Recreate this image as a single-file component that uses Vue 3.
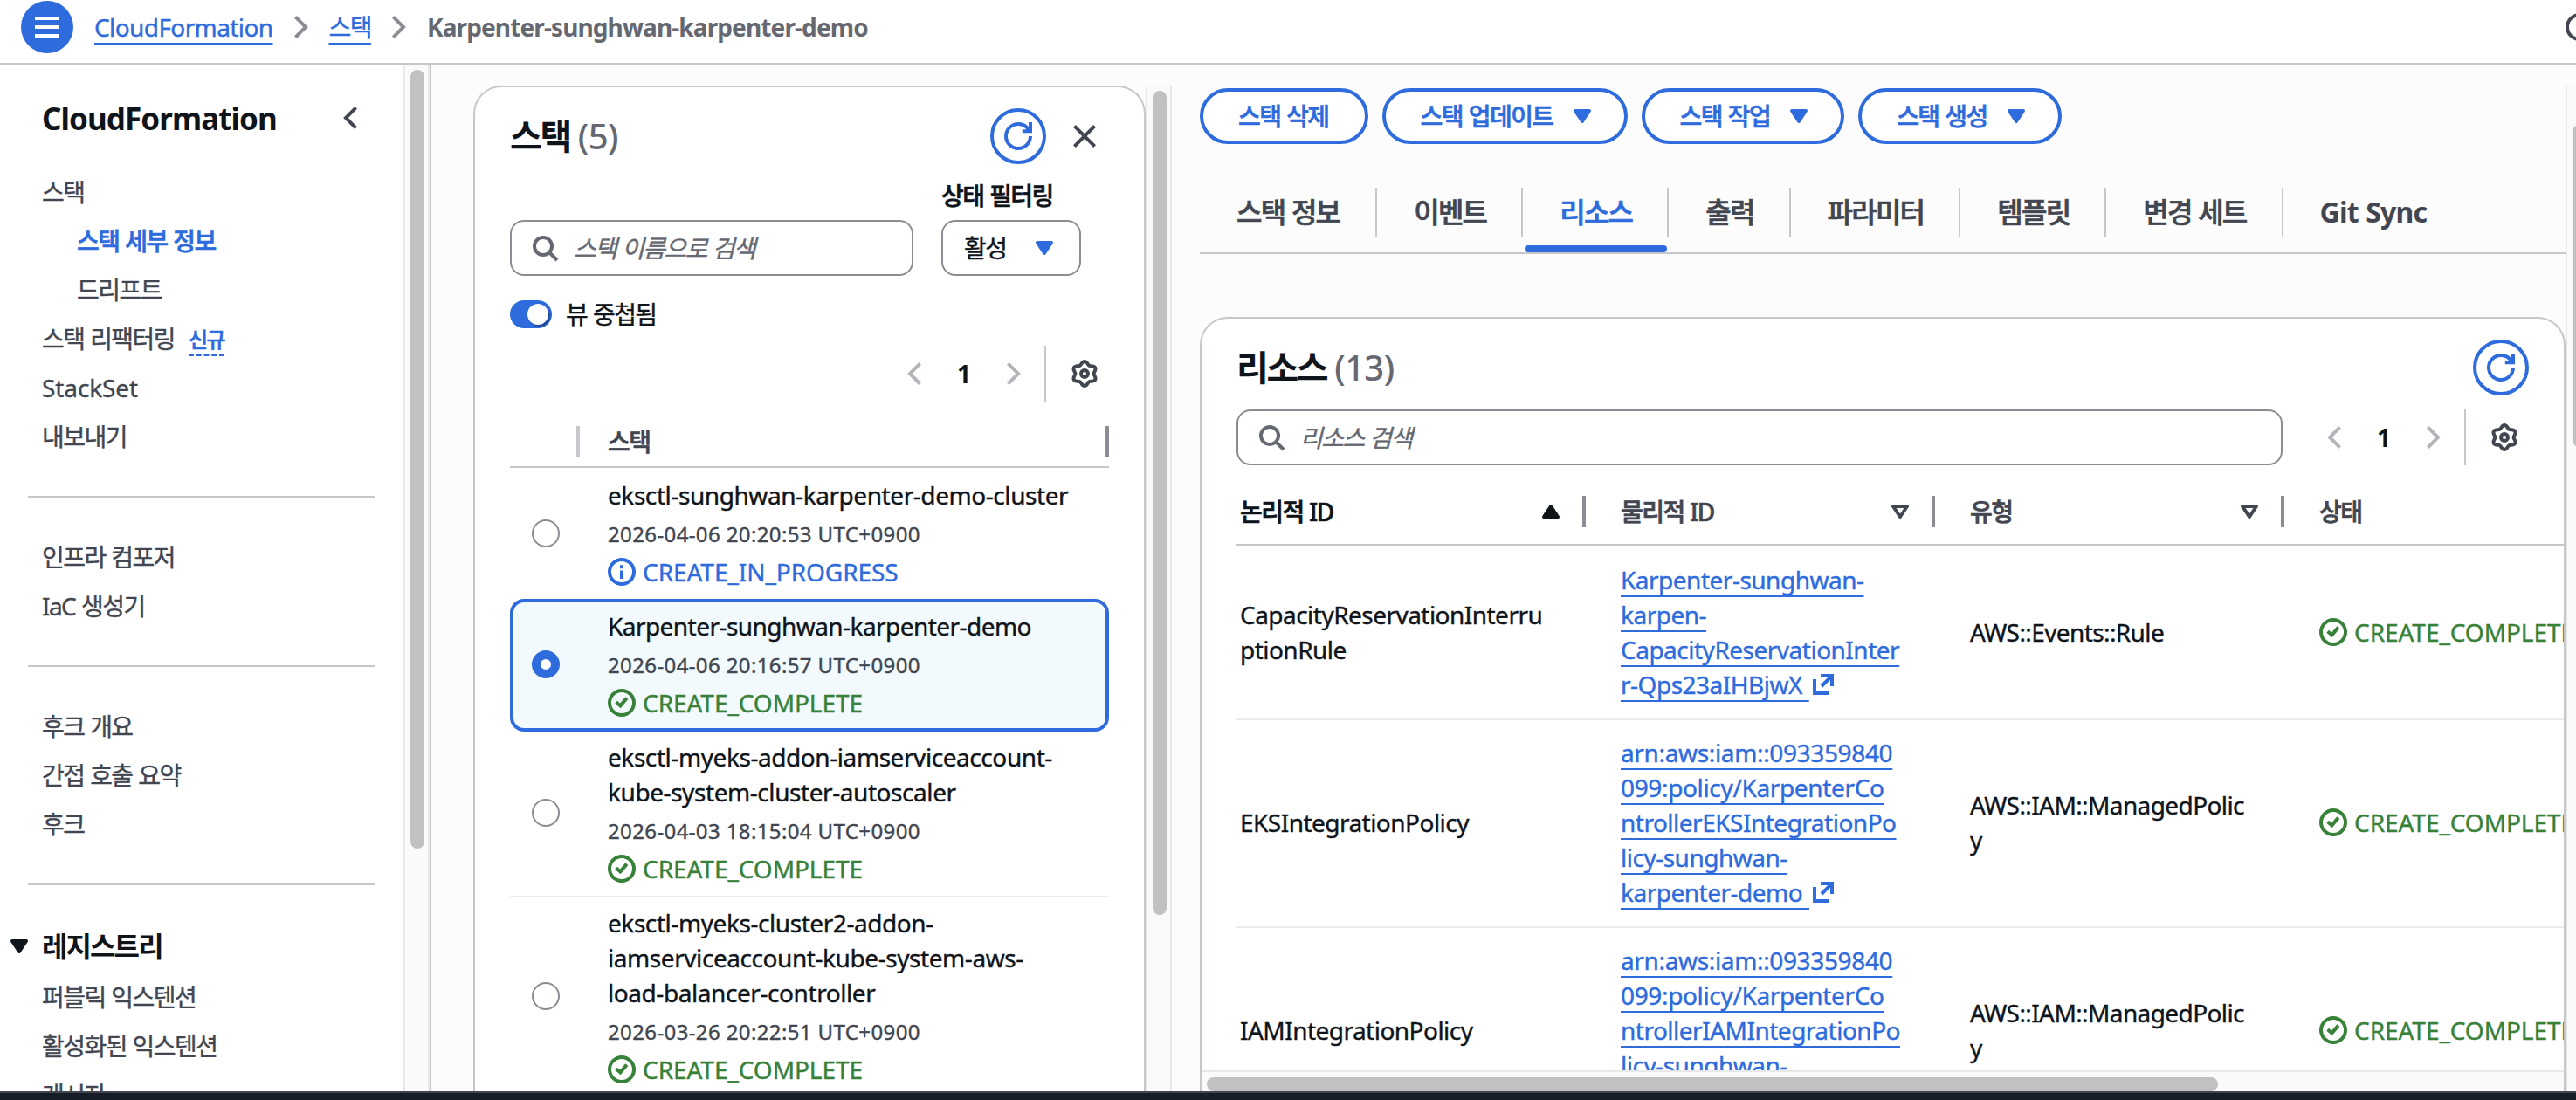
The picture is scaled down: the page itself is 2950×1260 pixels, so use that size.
<template>
  <div class="console">
    <header class="topbar">
      <button class="menu" aria-label="menu">
        <span></span><span></span><span></span>
      </button>
      <nav class="crumbs">
        <a class="crumb en">CloudFormation</a>
        <svg class="icon sep" viewBox="0 0 16 16"><path d="M4.7 2.2 10.5 8 4.7 13.8" /></svg>
        <a class="crumb">스택</a>
        <svg class="icon sep" viewBox="0 0 16 16"><path d="M4.7 2.2 10.5 8 4.7 13.8" /></svg>
        <span class="crumb-current">Karpenter-sunghwan-karpenter-demo</span>
      </nav>
      <svg class="icon info-edge" viewBox="0 0 16 16"><circle cx="8" cy="8" r="7" /></svg>
    </header>

    <div class="body">
      <!-- Navigation -->
      <aside class="sidebar">
        <div class="sidebar-content">
          <div class="sidebar-head">
            <h2>CloudFormation</h2>
            <svg class="icon dark" viewBox="0 0 16 16"><path d="M10.8 2.2 5 8l5.8 5.8" /></svg>
          </div>
          <template v-for="(group, g) in navGroups" :key="g">
            <hr v-if="g > 0">
            <div v-if="group.title" class="nav-title">
              <svg class="icon caret black" viewBox="0 0 16 16"><path d="m8 11 4-6H4z" /></svg>
              <span>{{ group.title }}</span>
            </div>
            <a
              v-for="item in group.items"
              :key="item.label"
              class="nav-item"
              :class="{ sub: item.sub, active: item.active, en: item.en }"
            >
              {{ item.label }}<span v-if="item.isNew" class="new">신규</span>
            </a>
          </template>
        </div>
        <div class="vscroll nav-scroll"><div class="thumb"></div></div>
      </aside>

      <!-- Stack list -->
      <section class="stacks-area">
        <div class="panel stacks">
          <div class="stacks-head">
            <h1>스택 <span>(5)</span></h1>
            <button class="refresh">
              <svg class="icon" viewBox="0 0 16 16"><path :d="refreshPath" /></svg>
            </button>
            <svg class="icon dark close" viewBox="0 0 16 16"><path d="M2.2 2.2l11.6 11.6M13.8 2.2 2.2 13.8" /></svg>
          </div>
          <div class="filters">
            <div class="search">
              <svg class="icon" viewBox="0 0 16 16"><circle cx="7" cy="7" r="5" /><path d="m15 15-4.5-4.5" /></svg>
              <em>스택 이름으로 검색</em>
            </div>
            <div class="status-filter">
              <label>상태 필터링</label>
              <div class="select">
                <span>활성</span>
                <svg class="icon caret blue" viewBox="0 0 16 16"><path d="m8 11 4-6H4z" /></svg>
              </div>
            </div>
          </div>
          <div class="nested">
            <span class="toggle"><i></i></span>
            <span>뷰 중첩됨</span>
          </div>
          <div class="pager stacks-pager">
            <svg class="icon off" viewBox="0 0 16 16"><path d="M10.8 2.2 5 8l5.8 5.8" /></svg>
            <b>1</b>
            <svg class="icon off" viewBox="0 0 16 16"><path d="M5.2 2.2 11 8l-5.8 5.8" /></svg>
            <span class="rule"></span>
            <svg class="icon dark" viewBox="0 0 32 32"><path class="thick" :d="gearPath" /><circle class="thick" cx="16" cy="16" r="4" /></svg>
          </div>
          <div class="stacks-th">
            <span class="bar light"></span>
            <span class="th">스택</span>
            <span class="bar"></span>
          </div>
          <div
            v-for="stack in stacks"
            :key="stack.date"
            class="stack"
            :class="{ selected: stack.id === selectedId, lined: stack.lined }"
            @click="selectedId = stack.id"
          >
            <span class="radio"></span>
            <div class="stack-text">
              <div v-for="line in stack.name" :key="line" class="name">{{ line }}</div>
              <div class="date">{{ stack.date }}</div>
              <div v-if="stack.status === 'CREATE_COMPLETE'" class="status ok">
                <svg class="icon" viewBox="0 0 16 16"><circle cx="8" cy="8" r="7" /><path d="M4.8 7.6 7.2 9.7 10.9 5.3" /></svg>
                <span>{{ stack.status }}</span>
              </div>
              <div v-else class="status progress">
                <svg class="icon" viewBox="0 0 16 16"><circle cx="8" cy="8" r="7" /><path d="M8 4.1v2M8 7.2V12" /></svg>
                <span>{{ stack.status }}</span>
              </div>
            </div>
          </div>
        </div>
        <div class="vscroll stacks-scroll"><div class="thumb"></div></div>
      </section>

      <!-- Stack details -->
      <section class="details">
        <div class="details-content">
          <div class="actions">
            <button v-for="action in actions" :key="action.label" class="action">
              {{ action.label }}
              <svg v-if="action.menu" class="icon caret blue" viewBox="0 0 16 16"><path d="m8 11 4-6H4z" /></svg>
            </button>
          </div>
          <div class="tabs">
            <a v-for="tab in tabs" :key="tab" class="tab" :class="{ current: tab === activeTab, latin: tab === 'Git Sync' }" @click="activeTab = tab">
              <span>{{ tab }}</span>
            </a>
          </div>
          <div class="panel resources">
            <div class="resources-head">
              <h1>리소스 <span>(13)</span></h1>
              <button class="refresh">
                <svg class="icon" viewBox="0 0 16 16"><path :d="refreshPath" /></svg>
              </button>
            </div>
            <div class="resources-tools">
              <div class="search">
                <svg class="icon" viewBox="0 0 16 16"><circle cx="7" cy="7" r="5" /><path d="m15 15-4.5-4.5" /></svg>
                <em>리소스 검색</em>
              </div>
              <div class="pager">
                <svg class="icon off" viewBox="0 0 16 16"><path d="M10.8 2.2 5 8l5.8 5.8" /></svg>
                <b>1</b>
                <svg class="icon off" viewBox="0 0 16 16"><path d="M5.2 2.2 11 8l-5.8 5.8" /></svg>
                <span class="rule"></span>
                <svg class="icon dark" viewBox="0 0 32 32"><path class="thick" :d="gearPath" /><circle class="thick" cx="16" cy="16" r="4" /></svg>
              </div>
            </div>
            <div class="grid-row grid-head">
              <div class="th sorted">
                논리적 ID
                <svg class="icon caret black" viewBox="0 0 16 16"><path d="m8 5 4 6H4z" /></svg>
                <span class="bar"></span>
              </div>
              <div class="th">
                물리적 ID
                <svg class="icon sort" viewBox="0 0 16 16"><path d="m8 11 4-6H4z" /></svg>
                <span class="bar"></span>
              </div>
              <div class="th">
                유형
                <svg class="icon sort" viewBox="0 0 16 16"><path d="m8 11 4-6H4z" /></svg>
                <span class="bar"></span>
              </div>
              <div class="th">상태</div>
            </div>
            <div v-for="res in resources" :key="res.logical[0]" class="grid-row">
              <div>
                <div v-for="line in res.logical" :key="line" class="name">{{ line }}</div>
              </div>
              <div class="physical">
                <div v-for="(line, i) in res.physical" :key="line" :class="{ arn: i < 2 && line.includes('0') }">
                  <a>{{ line }}</a><svg v-if="i === res.physical.length - 1" class="external" viewBox="0 0 24 24"><path d="M2 6v16h16M9 2h13v12M22 2 10 14" /></svg>
                </div>
              </div>
              <div class="type">
                <div v-for="line in res.type" :key="line">{{ line }}</div>
              </div>
              <div class="status ok">
                <svg class="icon" viewBox="0 0 16 16"><circle cx="8" cy="8" r="7" /><path d="M4.8 7.6 7.2 9.7 10.9 5.3" /></svg>
                <span>CREATE_COMPLETE</span>
              </div>
            </div>
            <div class="hscroll"><div class="thumb"></div></div>
          </div>
        </div>
        <div class="vscroll page-scroll"><div class="thumb"></div></div>
      </section>
    </div>
    <footer class="footer"></footer>
  </div>
</template>

<script setup>
import { ref } from 'vue'

const selectedId = ref(2)
const activeTab = ref('리소스')

const refreshPath = 'M15 8c0 3.87-3.13 7-7 7s-7-3.13-7-7 3.13-7 7-7c2.79 0 5.2 1.63 6.33 4M10.4 5.1H15V0'

// six-lobed gear outline around the middle of a 32px box
const gearPoints = []
for (let a = 0; a < 360; a += 5) {
  const t = (a * Math.PI) / 180
  const r = 12.3 + 1.7 * Math.cos(6 * t)
  gearPoints.push(`${(16 + r * Math.sin(t)).toFixed(2)} ${(16 - r * Math.cos(t)).toFixed(2)}`)
}
const gearPath = `M${gearPoints.join('L')}Z`

const navGroups = [
  {
    items: [
      { label: '스택' },
      { label: '스택 세부 정보', sub: true, active: true },
      { label: '드리프트', sub: true },
      { label: '스택 리팩터링', isNew: true },
      { label: 'StackSet', en: true },
      { label: '내보내기' }
    ]
  },
  { items: [{ label: '인프라 컴포저' }, { label: 'IaC 생성기' }] },
  { items: [{ label: '후크 개요' }, { label: '간접 호출 요약' }, { label: '후크' }] },
  {
    title: '레지스트리',
    items: [{ label: '퍼블릭 익스텐션' }, { label: '활성화된 익스텐션' }, { label: '게시자' }]
  }
]

const stacks = [
  { id: 1, name: ['eksctl-sunghwan-karpenter-demo-cluster'], date: '2026-04-06 20:20:53 UTC+0900', status: 'CREATE_IN_PROGRESS' },
  { id: 2, name: ['Karpenter-sunghwan-karpenter-demo'], date: '2026-04-06 20:16:57 UTC+0900', status: 'CREATE_COMPLETE' },
  { id: 3, name: ['eksctl-myeks-addon-iamserviceaccount-', 'kube-system-cluster-autoscaler'], date: '2026-04-03 18:15:04 UTC+0900', status: 'CREATE_COMPLETE' },
  { id: 4, lined: true, name: ['eksctl-myeks-cluster2-addon-', 'iamserviceaccount-kube-system-aws-', 'load-balancer-controller'], date: '2026-03-26 20:22:51 UTC+0900', status: 'CREATE_COMPLETE' }
]

const actions = [
  { label: '스택 삭제' },
  { label: '스택 업데이트', menu: true },
  { label: '스택 작업', menu: true },
  { label: '스택 생성', menu: true }
]

const tabs = ['스택 정보', '이벤트', '리소스', '출력', '파라미터', '템플릿', '변경 세트', 'Git Sync']

const resources = [
  {
    logical: ['CapacityReservationInterru', 'ptionRule'],
    physical: ['Karpenter-sunghwan-', 'karpen-', 'CapacityReservationInter', 'r-Qps23aIHBjwX '],
    type: ['AWS::Events::Rule']
  },
  {
    logical: ['EKSIntegrationPolicy'],
    physical: ['arn:aws:iam::093359840', '099:policy/KarpenterCo', 'ntrollerEKSIntegrationPo', 'licy-sunghwan-', 'karpenter-demo '],
    type: ['AWS::IAM::ManagedPolic', 'y']
  },
  {
    logical: ['IAMIntegrationPolicy'],
    physical: ['arn:aws:iam::093359840', '099:policy/KarpenterCo', 'ntrollerIAMIntegrationPo', 'licy-sunghwan-', 'karpenter-demo '],
    type: ['AWS::IAM::ManagedPolic', 'y']
  }
]
</script>

<style>
body {
  overflow: hidden;
}
</style>

<style scoped>
.console {
  display: flex;
  flex-direction: column;
  width: 2950px;
  height: 1260px;
  overflow: hidden;
  background: #fcfcfd;
  color: #0f141a;
  font-family: "Noto Sans", "Noto Sans CJK KR", sans-serif;
  font-size: 28px;
  line-height: 40px;
  letter-spacing: -1.55px;
  word-spacing: 1px;
  -webkit-text-stroke: 0.4px;
}

.console * {
  box-sizing: border-box;
}

button {
  padding: 0;
  font: inherit;
  letter-spacing: inherit;
  word-spacing: inherit;
}

h1,
h2 {
  margin: 0;
}

.icon {
  display: block;
  flex: none;
  width: 32px;
  height: 32px;
  fill: none;
  stroke: currentColor;
  stroke-width: 2;
}

.icon .thick {
  stroke-width: 4;
}

.dark {
  color: #424650;
}

.off {
  color: #b4b4bb;
}

.caret {
  fill: currentColor;
  stroke-linejoin: round;
}

.sort {
  stroke-linejoin: round;
}

.blue {
  color: #2e6bdc;
}

.black {
  color: #0f141a;
}

/* Top bar */
.topbar {
  flex: none;
  display: flex;
  align-items: flex-start;
  height: 74px;
  padding: 1px 0 0 24px;
  border-bottom: 2px solid #c6c6cd;
  background: #fff;
}

.menu {
  display: flex;
  flex-direction: column;
  align-items: center;
  justify-content: center;
  gap: 6px;
  width: 60px;
  height: 60px;
  border: 0;
  border-radius: 50%;
  background: #2e6bdc;
}

.menu span {
  width: 28px;
  height: 4px;
  background: #fff;
}

.crumbs {
  flex: 1;
  display: flex;
  align-items: center;
  height: 60px;
  margin-left: 24px;
}

.crumb {
  height: 40px;
  color: #2e6bdc;
  text-decoration: underline;
  text-decoration-thickness: 2px;
  text-underline-offset: 7px;
  text-decoration-skip-ink: none;
}

.crumb.en {
  letter-spacing: -0.6px;
}

.sep {
  margin: 0 16px;
  color: #8c8c94;
}

.crumb-current {
  color: #656871;
  font-weight: 700;
  letter-spacing: -0.88px;
  -webkit-text-stroke: 0;
}

.info-edge {
  margin: 14px -20px 0 0;
  color: #424650;
}

.body {
  flex: 1;
  display: flex;
  min-height: 0;
}

/* Scrollbars */
.vscroll {
  flex: none;
  width: 30px;
  border: 2px solid #e8e8e8;
  border-top: 0;
  border-bottom: 0;
  background: #fafafa;
}

.vscroll .thumb {
  width: 16px;
  margin-left: 6px;
  border-radius: 8px;
  background: #c1c1c1;
}

.nav-scroll {
  padding-top: 6px;
}

.nav-scroll .thumb {
  height: 892px;
}

.stacks-scroll {
  padding-top: 6px;
}

.stacks-scroll .thumb {
  height: 944px;
}

.page-scroll {
  margin-top: 24px;
  padding-top: 45px;
}

.page-scroll .thumb {
  height: 369px;
}

/* Sidebar */
.sidebar {
  flex: none;
  display: flex;
  width: 494px;
  border-right: 2px solid #c6c6cd;
  background: #fff;
}

.sidebar-content {
  width: 462px;
  overflow: hidden;
  color: #424650;
}

.sidebar-head {
  display: flex;
  align-items: center;
  justify-content: space-between;
  height: 118px;
  padding: 4px 44px 0 48px;
}

.sidebar-head h2 {
  padding-top: 2px;
  color: #0f141a;
  font-size: 35px;
  letter-spacing: -0.92px;
  -webkit-text-stroke: 0;
}

.nav-item {
  display: flex;
  align-items: center;
  height: 56px;
  padding-left: 48px;
}

.nav-item.sub {
  padding-left: 88px;
}

.nav-item.active {
  color: #2e6bdc;
  font-weight: 500;
  -webkit-text-stroke: 0.6px;
}

.nav-item.en {
  letter-spacing: -0.1px;
}

.new {
  margin-left: 16px;
  border-bottom: 2px dashed #2e6bdc;
  color: #2e6bdc;
  font-size: 24px;
  font-weight: 500;
  line-height: 34px;
  -webkit-text-stroke: 0.6px;
  position: relative;
  top: 2px;
}

.sidebar hr {
  height: 2px;
  margin: 40px 32px;
  border: 0;
  background: #c6c6cd;
}

.nav-title {
  display: flex;
  align-items: center;
  height: 60px;
  padding-left: 6px;
  color: #0f141a;
  font-size: 32px;
  font-weight: 700;
  letter-spacing: -1.9px;
  -webkit-text-stroke: 0;
}

.nav-title span {
  margin-left: 10px;
}

/* Panels */
.panel {
  border: 2px solid #c6c6cd;
  border-bottom: 0;
  border-radius: 32px 32px 0 0;
  background: #fff;
  overflow: hidden;
}

.panel h1 {
  flex: 1;
  font-size: 40px;
  letter-spacing: -2.4px;
  line-height: 50px;
  -webkit-text-stroke: 0;
}

.panel h1 span {
  color: #656871;
  font-weight: 500;
  letter-spacing: -0.6px;
}

.refresh {
  display: flex;
  align-items: center;
  justify-content: center;
  width: 64px;
  height: 64px;
  border: 4px solid #2e6bdc;
  border-radius: 50%;
  background: #fff;
  color: #2e6bdc;
}

.search {
  display: flex;
  align-items: center;
  height: 64px;
  padding-left: 22px;
  border: 2px solid #8c8c94;
  border-radius: 16px;
  background: #fff;
  color: #656871;
}

.search em {
  margin-left: 17px;
}

.pager {
  display: flex;
  align-items: center;
  height: 64px;
}

.pager b {
  width: 80px;
  text-align: center;
  letter-spacing: 0;
  -webkit-text-stroke: 0;
}

.pager .rule {
  width: 2px;
  height: 64px;
  margin: 0 28px 0 20px;
  background: #c6c6cd;
}

.th {
  color: #424650;
  font-weight: 500;
  -webkit-text-stroke: 0.7px;
}

.bar {
  width: 4px;
  height: 36px;
  background: #8c8c94;
}

.bar.light {
  background: #c6c6cd;
}

/* Stack list */
.stacks-area {
  flex: none;
  display: flex;
  width: 848px;
  padding: 24px 0 0 48px;
}

.stacks {
  width: 770px;
  padding: 0 40px;
}

.stacks-head {
  display: flex;
  align-items: center;
  height: 64px;
  margin-top: 24px;
}

.close {
  margin: 0 12px 0 28px;
}

.filters {
  display: flex;
  align-items: flex-end;
  height: 128px;
}

.stacks .search {
  width: 462px;
}

.status-filter {
  width: 160px;
  margin-left: 32px;
}

.status-filter label {
  display: block;
  margin-bottom: 8px;
  font-weight: 500;
  -webkit-text-stroke: 0.6px;
}

.select {
  display: flex;
  align-items: center;
  justify-content: space-between;
  height: 64px;
  padding: 0 24px;
  border: 2px solid #8c8c94;
  border-radius: 16px;
}

.nested {
  display: flex;
  align-items: center;
  height: 32px;
  margin-top: 28px;
}

.toggle {
  display: flex;
  justify-content: flex-end;
  width: 48px;
  height: 32px;
  margin-right: 16px;
  padding: 4px;
  border-radius: 16px;
  background: #2e6bdc;
}

.toggle i {
  width: 24px;
  height: 24px;
  border-radius: 50%;
  background: #fff;
  box-shadow: 2px 2px 2px rgba(0, 7, 22, 0.35);
}

.stacks-pager {
  justify-content: flex-end;
  margin-top: 20px;
  padding-right: 12px;
}

.stacks-th {
  display: flex;
  align-items: center;
  height: 76px;
  padding: 28px 0 10px 76px;
  border-bottom: 2px solid #c6c6cd;
}

.stacks-th .th {
  flex: 1;
  padding-left: 32px;
}

.stack {
  display: flex;
  align-items: center;
  padding: 9px 0 11px 25px;
  border-top: 2px solid transparent;
}

.stack.lined {
  border-top-color: #ebebf0;
}

.stack.selected {
  margin-bottom: -2px;
  padding: 7px 0 9px 21px;
  border: 4px solid #2e6bdc;
  border-radius: 16px;
  background: #f2fafe;
}

.radio {
  flex: none;
  width: 32px;
  height: 32px;
  border: 2px solid #8c8c94;
  border-radius: 50%;
  background: #fff;
}

.selected .radio {
  border: 10px solid #2e6bdc;
}

.stack-text {
  display: flex;
  flex-direction: column;
  margin-left: 55px;
  white-space: nowrap;
}

.name {
  letter-spacing: -0.53px;
}

.stack-text .name {
  letter-spacing: -0.43px;
}

.selected .stack-text .name {
  letter-spacing: -0.55px;
}

.date {
  margin: 5px 0 3px;
  color: #424650;
  font-size: 24px;
  letter-spacing: 0.38px;
  word-spacing: 0;
}

.status {
  display: flex;
  align-items: center;
  letter-spacing: -0.06px;
}

.status span {
  margin-left: 8px;
}

.ok {
  color: #378138;
}

.progress {
  color: #2e6bdc;
}

/* Details */
.details {
  flex: 1;
  display: flex;
  min-width: 0;
  overflow: hidden;
}

.details-content {
  flex: none;
  display: flex;
  flex-direction: column;
  width: 1596px;
  padding: 27px 0 0 32px;
}

.actions {
  flex: none;
  display: flex;
  gap: 16px;
}

.action {
  display: flex;
  align-items: center;
  height: 64px;
  padding: 0 41px 0 40px;
  border: 4px solid #2e6bdc;
  border-radius: 32px;
  background: #fff;
  color: #2e6bdc;
  font-weight: 500;
  -webkit-text-stroke: 0.6px;
}

.action .icon {
  margin: 0 -9px 0 17px;
}

.tabs {
  flex: none;
  display: flex;
  height: 126px;
  padding-top: 50px;
  border-bottom: 2px solid #c6c6cd;
  color: #424650;
  font-size: 32px;
  font-weight: 500;
  letter-spacing: -1.77px;
  -webkit-text-stroke: 0.7px;
}

.tab {
  display: flex;
  flex-direction: column;
  height: 74px;
}

.tab span {
  padding: 0 40px 0 42px;
  border-right: 2px solid #c6c6cd;
  line-height: 56px;
}

.tab:first-child span {
  padding-right: 41px;
}

.tab:last-child span {
  border-right: 0;
}

.tab.latin {
  font-weight: 700;
  letter-spacing: -0.8px;
  -webkit-text-stroke: 0;
}

.tab.current span {
  color: #2e6bdc;
}

.tab.current::after {
  content: "";
  height: 8px;
  margin: 10px 2px 0;
  border-radius: 4px;
  background: #2e6bdc;
}

.resources {
  flex: 1;
  position: relative;
  min-height: 0;
  margin-top: 72px;
  padding-left: 40px;
}

.resources-head {
  display: flex;
  align-items: center;
  height: 64px;
  margin: 24px 40px 0 0;
}

.resources-tools {
  display: flex;
  align-items: center;
  margin-top: 16px;
  padding-right: 52px;
}

.resources-tools .search {
  width: 1198px;
  margin-right: auto;
}

.grid-row {
  display: grid;
  grid-template-columns: 400px 400px 400px 320px;
  align-items: center;
  padding: 17px 0 19px;
  border-top: 2px solid #ebebf0;
  white-space: pre;
}

.grid-row > div {
  padding-left: 40px;
}

.grid-row > div:first-child {
  padding-left: 4px;
}

.grid-head {
  height: 92px;
  padding: 16px 0 0;
  border-top: 0;
  border-bottom: 2px solid #c6c6cd;
}

.grid-head + .grid-row {
  border-top-color: transparent;
}

.grid-head .th {
  display: flex;
  align-items: center;
  height: 36px;
  white-space: normal;
}

.grid-head .sorted {
  color: #0f141a;
}

.grid-head .icon {
  margin: 0 20px 0 auto;
}

.physical {
  color: #2e6bdc;
  letter-spacing: -0.5px;
}

.physical .arn {
  letter-spacing: -0.35px;
}

.physical a {
  text-decoration: underline;
  text-decoration-thickness: 2px;
  text-underline-offset: 7px;
  text-decoration-skip-ink: none;
}

.external {
  width: 24px;
  height: 24px;
  margin-left: 4px;
  fill: none;
  stroke: currentColor;
  stroke-width: 4;
  vertical-align: -1px;
}

.type {
  letter-spacing: -0.6px;
}

.hscroll {
  position: absolute;
  left: 0;
  right: 0;
  bottom: 0;
  height: 24px;
  padding: 6px 0 0 6px;
  border-top: 2px solid #e8e8e8;
  background: #fafafa;
}

.hscroll .thumb {
  width: 1158px;
  height: 16px;
  border-radius: 8px;
  background: #c1c1c1;
}

.footer {
  flex: none;
  height: 10px;
  border-top: 2px solid #424650;
  background: #161d26;
}
</style>
